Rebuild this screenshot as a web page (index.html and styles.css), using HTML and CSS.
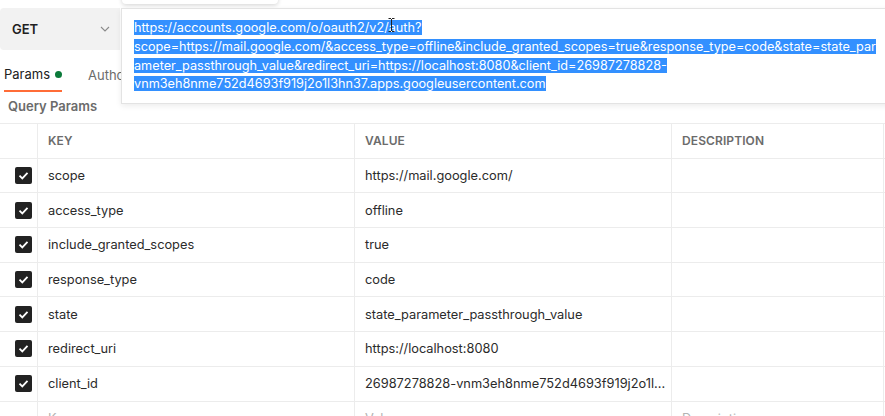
FILE: index.html
```html
<!DOCTYPE html>
<html>
<head>
<meta charset="utf-8">
<link rel="stylesheet" href="styles.css">
</head>
<body>
<div class="page">
  <div class="popup"></div>
  <div class="topbar">
    <div class="method">
      <span class="method-label">GET</span>
      <svg class="chev" width="10" height="6" viewBox="0 0 10 6"><path d="M1 1l4 4 4-4" fill="none" stroke="#8a8a8a" stroke-width="1.1"/></svg>
    </div>
    <div class="url-field"></div>
  </div>
  <div class="tabs">
    <div class="tab active">Params <span class="dot"></span></div>
    <div class="tab">Authorization</div>
  </div>
  <div class="section-title">Query Params</div>
  <div class="table">
    <div class="row head">
      <div class="cell chk"></div>
      <div class="cell">KEY</div>
      <div class="cell">VALUE</div>
      <div class="cell">DESCRIPTION</div>
    </div>
    <div class="row"><div class="cell chk"><span class="box"><svg width="11" height="9" viewBox="0 0 11 9"><path d="M1.5 4.6l2.8 2.8L9.5 1.8" fill="none" stroke="#fff" stroke-width="1.8"/></svg></span></div><div class="cell">scope</div><div class="cell">https://mail.google.com/</div><div class="cell"></div></div>
    <div class="row"><div class="cell chk"><span class="box"><svg width="11" height="9" viewBox="0 0 11 9"><path d="M1.5 4.6l2.8 2.8L9.5 1.8" fill="none" stroke="#fff" stroke-width="1.8"/></svg></span></div><div class="cell">access_type</div><div class="cell">offline</div><div class="cell"></div></div>
    <div class="row"><div class="cell chk"><span class="box"><svg width="11" height="9" viewBox="0 0 11 9"><path d="M1.5 4.6l2.8 2.8L9.5 1.8" fill="none" stroke="#fff" stroke-width="1.8"/></svg></span></div><div class="cell">include_granted_scopes</div><div class="cell">true</div><div class="cell"></div></div>
    <div class="row"><div class="cell chk"><span class="box"><svg width="11" height="9" viewBox="0 0 11 9"><path d="M1.5 4.6l2.8 2.8L9.5 1.8" fill="none" stroke="#fff" stroke-width="1.8"/></svg></span></div><div class="cell">response_type</div><div class="cell">code</div><div class="cell"></div></div>
    <div class="row"><div class="cell chk"><span class="box"><svg width="11" height="9" viewBox="0 0 11 9"><path d="M1.5 4.6l2.8 2.8L9.5 1.8" fill="none" stroke="#fff" stroke-width="1.8"/></svg></span></div><div class="cell">state</div><div class="cell">state_parameter_passthrough_value</div><div class="cell"></div></div>
    <div class="row"><div class="cell chk"><span class="box"><svg width="11" height="9" viewBox="0 0 11 9"><path d="M1.5 4.6l2.8 2.8L9.5 1.8" fill="none" stroke="#fff" stroke-width="1.8"/></svg></span></div><div class="cell">redirect_uri</div><div class="cell">https://localhost:8080</div><div class="cell"></div></div>
    <div class="row"><div class="cell chk"><span class="box"><svg width="11" height="9" viewBox="0 0 11 9"><path d="M1.5 4.6l2.8 2.8L9.5 1.8" fill="none" stroke="#fff" stroke-width="1.8"/></svg></span></div><div class="cell">client_id</div><div class="cell">26987278828-vnm3eh8nme752d4693f919j2o1l...</div><div class="cell"></div></div>
    <div class="row placeholder"><div class="cell chk"></div><div class="cell">Key</div><div class="cell">Value</div><div class="cell">Description</div></div>
  </div>

  <div class="url-overlay">
    <div class="url-text"><span class="sel">https://accounts.google.com/o/oauth2/v2/auth?</span><br><span class="sel">scope=https://mail.google.com/&amp;access_type=offline&amp;include_granted_scopes=true&amp;response_type=code&amp;state=state_par</span><br><span class="sel">ameter_passthrough_value&amp;redirect_uri=https://localhost:8080&amp;client_id=26987278828-</span><br><span class="sel">vnm3eh8nme752d4693f919j2o1l3hn37.apps.googleusercontent.com</span></div>
    <svg class="ibeam" width="7" height="14" viewBox="0 0 7 14"><path d="M0.5 0.5h2.5M4 0.5h2.5M3.5 1v12M0.5 13.5h2.5M4 13.5h2.5" fill="none" stroke="#222" stroke-width="1"/></svg>
  </div>
</div>
</body>
</html>
```

FILE: styles.css
```css
* { box-sizing: border-box; }
html, body { margin: 0; padding: 0; background: #fff; }
body { font-family: Inter, "Noto Sans", sans-serif; font-size: 13px; color: #212121; }
.page { position: relative; width: 885px; height: 416px; overflow: hidden; background: #fff; }

.popup {
  position: absolute; left: 122px; top: -20px; width: 156px; height: 24px;
  background: #fff; border-radius: 4px;
  box-shadow: 0 1px 4px rgba(0,0,0,0.18);
}

.topbar { display: flex; padding-top: 8px; height: 50px; }
.method {
  width: 120px; height: 42px; background: #f2f2f2;
  border-radius: 4px 0 0 4px;
  display: flex; align-items: center; justify-content: space-between;
  padding: 0 10px 0 12px;
}
.method-label { font-weight: 600; font-size: 13px; color: #212121; }
.url-field { flex: 1; }

.tabs { display: flex; height: 42px; padding-left: 4px; align-items: stretch; }
.tab { display: flex; align-items: center; font-size: 13px; color: #6b6b6b; padding-top: 8px; margin-right: 26px; }
.tab.active { color: #212121; border-bottom: 2px solid #ff6c37; width: 58px; }
.dot { display: inline-block; width: 7px; height: 7px; border-radius: 50%; background: #0b7a3a; margin-left: 5px; }

.section-title { font-size: 13px; font-weight: 600; color: #6b6b6b; padding-left: 8px; height: 31px; display: flex; align-items: center; padding-bottom: 3px; }

.table { border-top: 1px solid #ececec; width: 885px; }
.row { display: grid; grid-template-columns: 38px 317px 317px 212px; height: 34.7px; border-bottom: 1px solid #ececec; }
.cell { display: flex; align-items: center; padding-left: 10px; border-right: 1px solid #ececec; white-space: nowrap; overflow: hidden; color: #2b2b2b; font-size: 12.8px; }
.cell.chk { padding-left: 15px; }
.head .cell { font-size: 12px; font-weight: 600; color: #6b6b6b; letter-spacing: 0.1px; }
.box { width: 17px; height: 17px; background: #222; border-radius: 2px; display: flex; align-items: center; justify-content: center; }
.placeholder .cell { color: #b3b3b3; }

.url-overlay {
  position: absolute; left: 121px; top: 8px; width: 780px; height: 96px;
  background: #fff; border: 1px solid #e3e3e3;
  box-shadow: 0 2px 6px rgba(0,0,0,0.08);
  padding: 10px 0 0 12px;
}
.url-text { font-size: 12.7px; line-height: 18.75px; color: #fff; white-space: nowrap; }
.sel { background: #3390ff; }
.ibeam { position: absolute; left: 266px; top: 9px; }
```
